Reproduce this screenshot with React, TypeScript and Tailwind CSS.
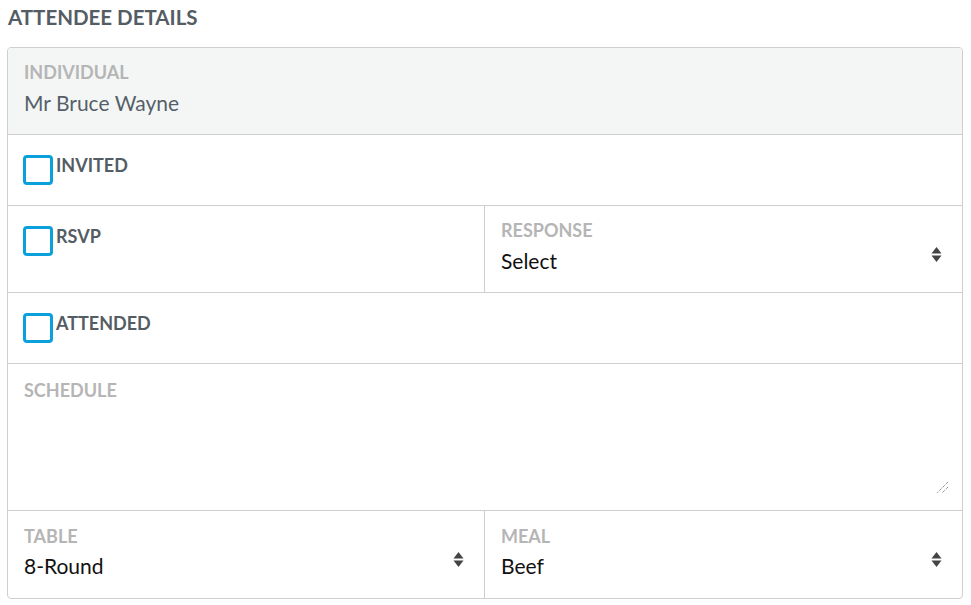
import React from "react";

const font = { fontFamily: "Lato, 'Open Sans', sans-serif" };

function Arrows() {
  return (
    <svg width="11" height="15" viewBox="0 0 11 15" className="shrink-0">
      <path d="M5.5 0 L10.5 6.5 L0.5 6.5 Z" fill="#444" />
      <path d="M5.5 15 L10.5 8.5 L0.5 8.5 Z" fill="#444" />
    </svg>
  );
}

function Box() {
  return <div className="w-[30px] h-[30px] mt-[1px] border-[3px] border-[#0aa0dc] rounded-[4px] bg-white shrink-0" />;
}

function CheckLabel({ label }: { label: string }) {
  return <span className="ml-[3px] mt-[1px] text-[18px] font-bold text-[#545c64] leading-[20px]">{label}</span>;
}

function SelectCell({ label, value, border, pt, gap }: { label: string; value: string; border?: boolean; pt: string; gap: string }) {
  return (
    <div className={`flex-1 flex items-start pl-[16px] pr-[20px] ${border ? "border-r border-[#cfcfcf]" : ""}`}>
      <div className={`flex-1 flex flex-col ${pt}`}>
        <span className="text-[18px] font-bold text-[#b5b5b5] leading-[20px]">{label}</span>
        <span className={`text-[21px] text-[#111] leading-[26px] ${gap}`}>{value}</span>
      </div>
      <div className="self-center mt-[10px]">
        <Arrows />
      </div>
    </div>
  );
}

export default function App() {
  return (
    <div className="w-[971px] h-[605px] bg-white" style={font}>
      <div className="pl-[8px] pt-[4px] text-[20.5px] font-bold text-[#545c64] leading-[26px]">ATTENDEE DETAILS</div>
      <div className="ml-[7px] mt-[17px] w-[956px] border border-[#cfcfcf] rounded-[4px] overflow-hidden">
        <div className="h-[87px] bg-[#f4f6f6] border-b border-[#cfcfcf] pl-[16px] pt-[14px] flex flex-col">
          <span className="text-[18px] font-bold text-[#b5b5b5] leading-[20px]">INDIVIDUAL</span>
          <span className="text-[21px] text-[#555f68] leading-[26px] mt-[8px]">Mr Bruce Wayne</span>
        </div>
        <div className="flex items-start h-[71px] pl-[15px] pt-[19px] border-b border-[#cfcfcf]">
          <Box />
          <CheckLabel label="INVITED" />
        </div>
        <div className="flex h-[87px] border-b border-[#cfcfcf]">
          <div className="w-[477px] border-r border-[#cfcfcf] flex items-start pl-[15px] pt-[19px]">
            <Box />
            <CheckLabel label="RSVP" />
          </div>
          <SelectCell label="RESPONSE" value="Select" pt="pt-[14px]" gap="mt-[8px]" />
        </div>
        <div className="flex items-start h-[71px] pl-[15px] pt-[19px] border-b border-[#cfcfcf]">
          <Box />
          <CheckLabel label="ATTENDED" />
        </div>
        <div className="h-[147px] border-b border-[#cfcfcf] pl-[16px] pt-[15px] relative">
          <span className="text-[18px] font-bold text-[#b5b5b5] leading-[20px]">SCHEDULE</span>
          <svg width="13" height="13" viewBox="0 0 13 13" className="absolute right-[13px] bottom-[16px]">
            <path d="M12 1 L1 12 M12 6 L6 12" stroke="#666" strokeWidth="1" strokeDasharray="1 1" />
          </svg>
        </div>
        <div className="flex h-[87px]">
          <div className="w-[477px] flex border-r border-[#cfcfcf]">
            <SelectCell label="TABLE" value="8-Round" pt="pt-[15px]" gap="mt-[7px]" />
          </div>
          <SelectCell label="MEAL" value="Beef" pt="pt-[15px]" gap="mt-[7px]" />
        </div>
      </div>
    </div>
  );
}
